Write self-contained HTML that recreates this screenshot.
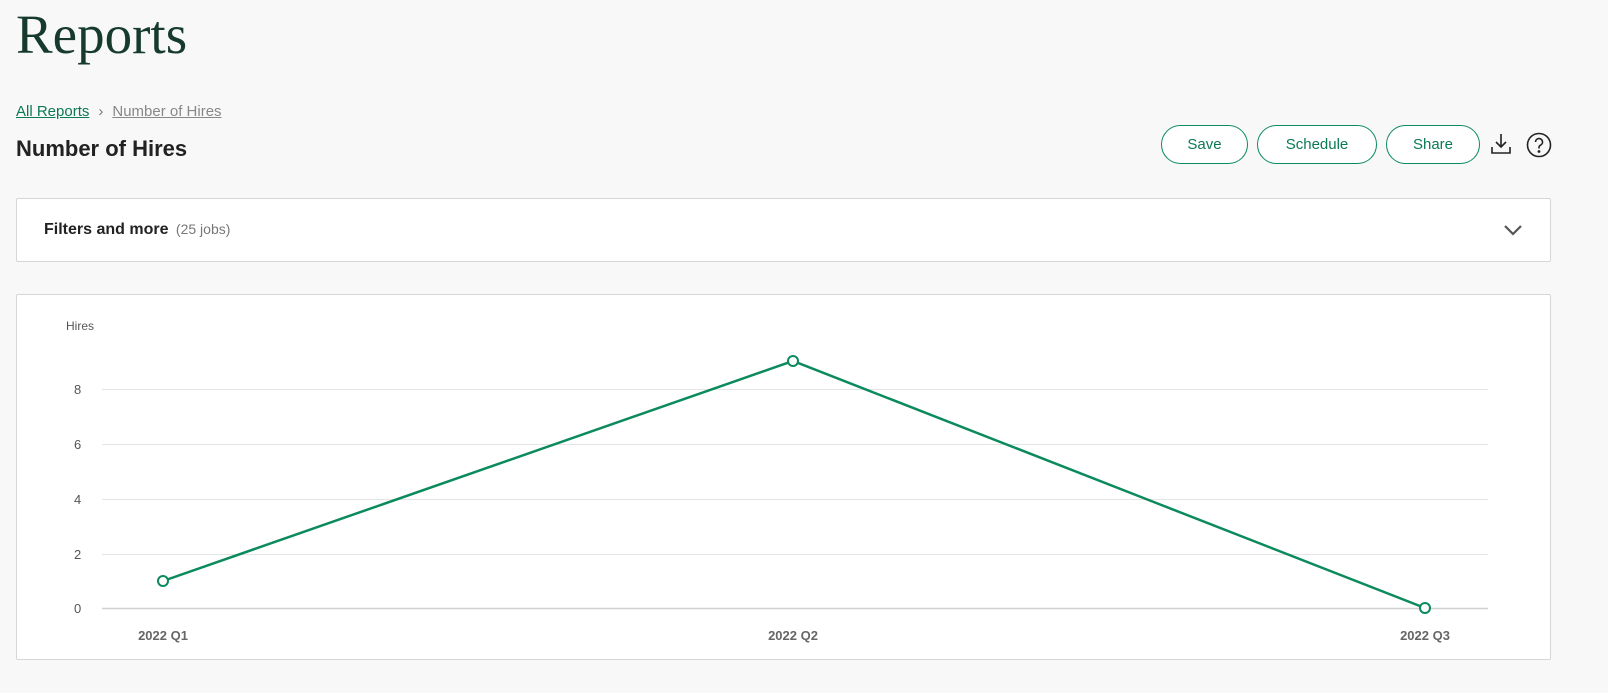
<!DOCTYPE html>
<html><head><meta charset="utf-8"><style>
body{margin:0;background:#f8f8f8;width:1608px;height:693px;overflow:hidden;font-family:"Liberation Sans",sans-serif;color:#222;position:relative}
.a{position:absolute}
h1{position:absolute;left:16px;top:3px;margin:0;font-family:"Liberation Serif",serif;font-weight:400;font-size:55px;color:#163a2c}
.btn{position:absolute;top:125px;height:39px;border:1px solid #0b8a5c;border-radius:20px;box-sizing:border-box;color:#0b7a52;font-size:15px;display:flex;align-items:center;justify-content:center;background:#fff}
.box{position:absolute;left:16px;width:1535px;background:#fff;border:1px solid #d6d6d6;box-sizing:border-box;border-radius:2px}
</style></head><body>
<h1>Reports</h1>
<div class="a" style="left:16px;top:103px;font-size:15px"><span style="color:#0b7a52;text-decoration:underline">All Reports</span><span style="color:#777;margin:0 9px">›</span><span style="color:#888;text-decoration:underline">Number of Hires</span></div>
<div class="a" style="left:16px;top:136px;font-size:22px;font-weight:700;color:#222">Number of Hires</div>
<div class="btn" style="left:1161px;width:87px">Save</div>
<div class="btn" style="left:1257px;width:120px">Schedule</div>
<div class="btn" style="left:1386px;width:94px">Share</div>
<svg class="a" style="left:1490px;top:132px" width="22" height="24" viewBox="0 0 22 24" fill="none" stroke="#222" stroke-width="1.6"><path d="M11 2v13M6 10l5 5 5-5M2 15v6h18v-6"/></svg>
<svg class="a" style="left:1526px;top:132px" width="26" height="26" viewBox="0 0 26 26" fill="none" stroke="#222" stroke-width="1.6"><circle cx="13" cy="13" r="11.5"/><path d="M9.5 10a3.5 3.5 0 1 1 5 3.2c-1 .5-1.5 1.2-1.5 2.3v1"/><circle cx="13" cy="19.5" r=".6" fill="#222"/></svg>
<div class="box" style="top:198px;height:64px">
<div class="a" style="left:27px;top:22px;font-size:16px;font-weight:700">Filters and more <span style="font-weight:400;color:#777;font-size:14px;margin-left:3px">(25 jobs)</span></div>
<svg class="a" style="left:1486px;top:24px" width="20" height="14" viewBox="0 0 20 14" fill="none" stroke="#555" stroke-width="2.2"><path d="M2 3l8 8 8-8"/></svg>
</div>
<div class="box" style="top:294px;height:366px"></div>
<svg class="a" style="left:0;top:0" width="1608" height="693">
<g stroke="#e4e4e4" stroke-width="1"><line x1="102" y1="389.5" x2="1488" y2="389.5"/><line x1="102" y1="444.5" x2="1488" y2="444.5"/><line x1="102" y1="499.5" x2="1488" y2="499.5"/><line x1="102" y1="554.5" x2="1488" y2="554.5"/></g>
<line x1="102" y1="608.5" x2="1488" y2="608.5" stroke="#d0d0d0" stroke-width="1.5"/>
<g font-family="Liberation Sans, sans-serif" font-size="13" fill="#555"><text x="66" y="330" font-size="12">Hires</text>
<text x="74" y="394">8</text><text x="74" y="449">6</text><text x="74" y="504">4</text><text x="74" y="559">2</text><text x="74" y="613">0</text>
<text x="163" y="640" text-anchor="middle" font-weight="700" fill="#666">2022 Q1</text><text x="793" y="640" text-anchor="middle" font-weight="700" fill="#666">2022 Q2</text><text x="1425" y="640" text-anchor="middle" font-weight="700" fill="#666">2022 Q3</text></g>
<polyline points="163,581 793,361 1425,608" fill="none" stroke="#0b8a5c" stroke-width="2.5"/>
<g fill="#fff" stroke="#0b8a5c" stroke-width="2"><circle cx="163" cy="581" r="5"/><circle cx="793" cy="361" r="5"/><circle cx="1425" cy="608" r="5"/></g>
</svg>
</body></html>
